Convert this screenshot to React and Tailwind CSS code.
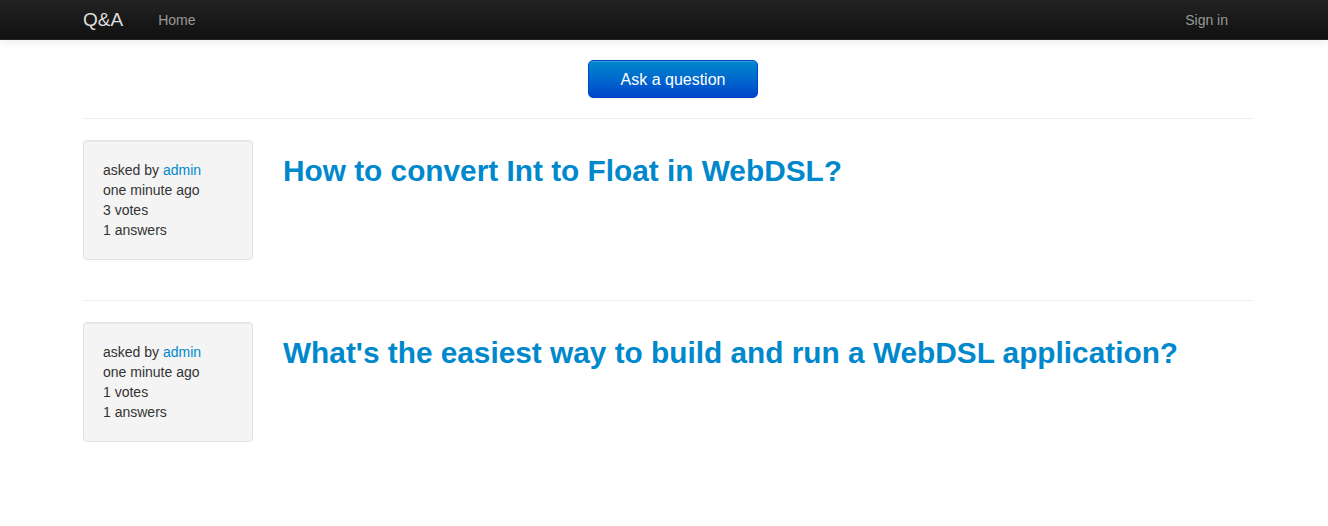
import React from 'react';

const questions = [
    { title: 'How to convert Int to Float in WebDSL?', votes: 3, answers: 1 },
    { title: "What's the easiest way to build and run a WebDSL application?", votes: 1, answers: 1 },
];

function Divider() {
    return <hr className="my-5 border-0 border-t border-t-[#eeeeee] border-b border-b-white" />;
}

export default function App() {
    return (
        <div className="min-h-screen bg-white text-[#333333] text-[14px] leading-5" style={{ fontFamily: '"Liberation Sans", Arial, sans-serif' }}>
            {/* Navbar */}
            <div className="h-10 bg-gradient-to-b from-[#222222] to-[#111111] border-b border-[#252525] shadow-[0_1px_10px_rgba(0,0,0,0.1)]">
                <div className="w-[1170px] ml-[83px] flex items-center h-10 justify-between">
                    <div className="flex items-center">
                        <a href="#" className="text-[19px] text-[#dddddd] leading-5 pr-5">Q&amp;A</a>
                        <a href="#" className="text-[#999999] px-[15px] leading-5">Home</a>
                    </div>
                    <a href="#" className="text-[#999999] px-[15px] mr-[10px] leading-5">Sign in</a>
                </div>
            </div>

            <div className="w-[1170px] ml-[83px]">
                <div className="flex justify-center mt-5 pl-[10px]">
                    <button className="w-[170px] h-[38px] pt-px rounded-[5px] border border-[#0044cc] bg-gradient-to-b from-[#0088cc] to-[#0044cc] text-white text-[16px] shadow-[inset_0_1px_0_rgba(255,255,255,0.2),0_1px_2px_rgba(0,0,0,0.05)]">
                        Ask a question
                    </button>
                </div>

                {questions.map((q, i) => (
                    <div key={i}>
                        <Divider />
                        <div className="flex gap-[30px]">
                            <div className="w-[170px] shrink-0 mb-5 bg-[#f4f4f4] border border-[#e3e3e3] rounded p-[19px] shadow-[inset_0_1px_1px_rgba(0,0,0,0.05)]">
                                <div>asked by <a href="#" className="text-[#0088cc]">admin</a></div>
                                <div>one minute ago</div>
                                <div>{q.votes} votes</div>
                                <div>{q.answers} answers</div>
                            </div>
                            <h2 className="my-[10px] pt-px text-[29.8px] leading-10 font-bold text-[#0088cc]">
                                <a href="#">{q.title}</a>
                            </h2>
                        </div>
                    </div>
                ))}
            </div>
        </div>
    );
}
